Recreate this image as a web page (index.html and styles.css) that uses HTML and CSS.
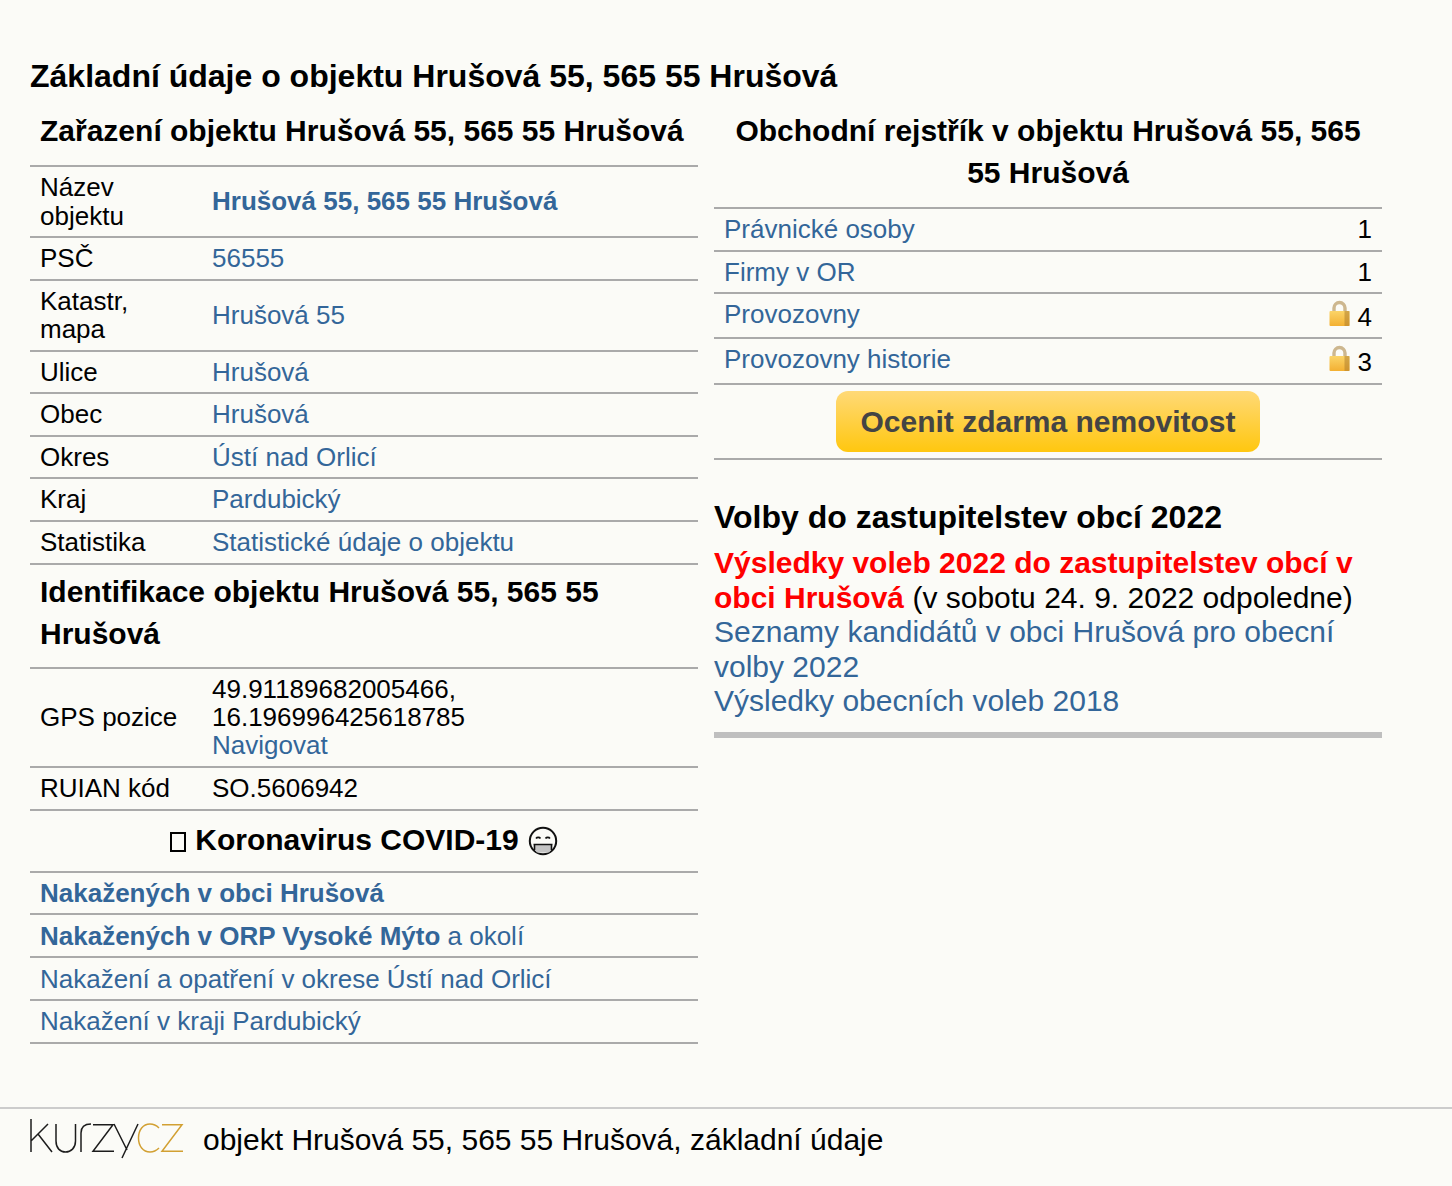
FILE: index.html
```html
<!DOCTYPE html>
<html lang="cs">
<head>
<meta charset="utf-8">
<title>Hrušová 55</title>
<link rel="stylesheet" href="styles.css">
</head>
<body>
<svg class="defs" width="0" height="0" aria-hidden="true">
  <defs>
    <linearGradient id="lockbody" x1="0" y1="0" x2="0" y2="1"><stop offset="0" stop-color="#fbd468"/><stop offset="1" stop-color="#f3b032"/></linearGradient>
    <symbol id="lock" viewBox="0 0 20 26">
      <path d="M4.500 12V8a5.500 5.500 0 0 1 11 0V12" fill="none" stroke="#cdb78f" stroke-width="3.400"/>
      <rect x="0" y="11" width="20" height="15" rx="1" fill="url(#lockbody)"/>
      <rect x="15" y="11" width="5" height="15" fill="#a9772a" opacity=".5"/>
    </symbol>
  </defs>
</svg>
<main class="page">
  <h1 class="title">Základní údaje o objektu Hrušová 55, 565 55 Hrušová</h1>
  <div class="columns">
    <section class="col">
      <h2 class="head left first">Zařazení objektu Hrušová 55, 565 55 Hrušová</h2>
      <table class="info">
        <tr><td class="k">Název objektu</td><td><a href="#"><b>Hrušová 55, 565 55 Hrušová</b></a></td></tr>
        <tr><td class="k">PSČ</td><td><a href="#">56555</a></td></tr>
        <tr><td class="k">Katastr, mapa</td><td><a href="#">Hrušová 55</a></td></tr>
        <tr><td class="k">Ulice</td><td><a href="#">Hrušová</a></td></tr>
        <tr><td class="k">Obec</td><td><a href="#">Hrušová</a></td></tr>
        <tr><td class="k">Okres</td><td><a href="#">Ústí nad Orlicí</a></td></tr>
        <tr><td class="k">Kraj</td><td><a href="#">Pardubický</a></td></tr>
        <tr><td class="k">Statistika</td><td><a href="#">Statistické údaje o objektu</a></td></tr>
      </table>
      <h2 class="head left">Identifikace objektu Hrušová 55, 565 55 Hrušová</h2>
      <table class="info">
        <tr><td class="k">GPS pozice</td><td>49.91189682005466,<br>16.196996425618785<br><a href="#">Navigovat</a></td></tr>
        <tr><td class="k">RUIAN kód</td><td>SO.5606942</td></tr>
      </table>
      <h2 class="head center covid"><span class="tofu"></span> Koronavirus COVID-19 <svg class="mask" width="30" height="30" viewBox="0 0 30 30" role="img" aria-label="rouška">
        <circle cx="15" cy="15" r="13.200" fill="none" stroke="#111" stroke-width="2"/>
        <path d="M6 23V19H24V23L21 26.500H9Z" fill="#c4c4c4"/>
        <path d="M5.500 18.500H24.500M6.500 19V24M23.500 19V24" fill="none" stroke="#111" stroke-width="1.600"/>
        <path d="M8 12.500C9 11 11.500 11 12.500 12.500M17.500 12.500C18.500 11 21 11 22 12.500" fill="none" stroke="#111" stroke-width="1.600"/>
      </svg></h2>
      <ul class="list">
        <li><a href="#"><b>Nakažených v obci Hrušová</b></a></li>
        <li><a href="#"><b>Nakažených v ORP Vysoké Mýto</b> a okolí</a></li>
        <li><a href="#">Nakažení a opatření v okrese Ústí nad Orlicí</a></li>
        <li><a href="#">Nakažení v kraji Pardubický</a></li>
      </ul>
    </section>
    <section class="col">
      <h2 class="head center">Obchodní rejstřík v objektu Hrušová 55, 565 55 Hrušová</h2>
      <ul class="list reg">
        <li><a href="#">Právnické osoby</a><span class="num">1</span></li>
        <li><a href="#">Firmy v OR</a><span class="num">1</span></li>
        <li class="locked"><a href="#">Provozovny</a><span class="num"><svg class="lock"><use href="#lock"/></svg> 4</span></li>
        <li class="locked"><a href="#">Provozovny historie</a><span class="num"><svg class="lock"><use href="#lock"/></svg> 3</span></li>
      </ul>
      <div class="cta-row"><a class="cta" href="#">Ocenit zdarma nemovitost</a></div>
      <h2 class="vote-head">Volby do zastupitelstev obcí 2022</h2>
      <div class="vote">
        <a class="red" href="#">Výsledky voleb 2022 do zastupitelstev obcí v obci Hrušová</a> (v sobotu 24. 9. 2022 odpoledne)<br>
        <a href="#">Seznamy kandidátů v obci Hrušová pro obecní volby 2022</a><br>
        <a href="#">Výsledky obecních voleb 2018</a>
      </div>
    </section>
  </div>
</main>
<footer class="foot">
  <svg class="logo" width="156" height="42" viewBox="0 0 156 42" role="img" aria-label="kurzy.cz">
    <g fill="none" stroke="#1c1c1c" stroke-width="1.500">
      <path d="M1 0V33M1 22L18 5M8 15L22 33"/>
      <path d="M26 5V22C26 29 30 33 35.500 33S45.500 29 45.500 22V5"/>
      <path d="M51 33V14C51 8 55 5 61 5"/>
      <path d="M63 5.700H83L63 32.300H84"/>
      <path d="M84 5L97 31M108 5L92 39"/>
    </g>
    <g fill="none" stroke="#d2a032" stroke-width="1.500">
      <path d="M129 9C126.500 6.500 123.500 5 120 5C113 5 108.500 11 108.500 19S113 33 120 33C123.500 33 126.500 31.500 129 29"/>
      <path d="M132 5.700H152L132 32.300H153"/>
    </g>
  </svg>
  <span class="foot-text">objekt Hrušová 55, 565 55 Hrušová, základní údaje</span>
</footer>
</body>
</html>
```
FILE: styles.css
```css
* { box-sizing: border-box; }
html, body { margin: 0; padding: 0; }
body {
  background: #fbfbf7;
  color: #000;
  font-family: "Liberation Sans", Arial, sans-serif;
  font-size: 26px;
  line-height: 28.4px;
  min-height: 1186px;
  display: flex;
  flex-direction: column;
}
.defs { position: absolute; }
a { color: #336699; text-decoration: none; }
.page { padding: 55px 70px 0 30px; flex: 1; }
.title { font-size: 32px; line-height: 42px; margin: 0 0 13px; font-weight: bold; }
.columns { display: grid; grid-template-columns: 668px 668px; column-gap: 16px; align-items: start; }
.head {
  font-size: 30px; line-height: 42px; margin: 0; padding: 0 10px 13px;
  text-align: center; font-weight: bold;
}
.head.left { text-align: left; padding: 6px 10px 12px; }
.head.first { padding: 0 10px 13px; }
.head.center { text-align: center; }
.covid { padding: 8px 0 10px; display: block; }
.tofu { display: inline-block; width: 16px; height: 20px; margin-right: 1px; border: 2px solid #000; vertical-align: -2px; }
.mask { vertical-align: -6px; margin-left: 1px; }
.info { width: 100%; border-collapse: collapse; border-top: 2px solid #aaa; }
.info td { padding: 6.100px 10px; border-bottom: 2px solid #aaa; vertical-align: middle; }
.info .k { width: 172px; }
.list { list-style: none; margin: 0; padding: 0; border-top: 2px solid #aaa; }
.list li { padding: 6.200px 10px 6.300px; border-bottom: 2px solid #aaa; display: flex; justify-content: space-between; }
.list.reg li { padding: 6.100px 10px; }
.num { white-space: nowrap; }
.list.reg .locked { padding-top: 5.900px; padding-bottom: 5.900px; }
.lock { width: 21px; height: 26px; vertical-align: 0; }
.cta-row { display: flex; justify-content: center; padding: 6px 0 6px; border-bottom: 2px solid #aaa; }
.cta {
  display: block; width: 424px; height: 61px; border-radius: 12px; text-align: center;
  background: linear-gradient(#ffd977, #ffc70f);
  color: #444; font-weight: bold; font-size: 30px; line-height: 61px;
}
.vote-head { font-size: 32px; line-height: 42px; margin: 36px 0 8.500px; font-weight: bold; }
.vote { font-size: 30px; line-height: 34.500px; padding-bottom: 13px; border-bottom: 6px solid #bfbfbf; }
.red { color: #ff0000; font-weight: bold; }
.foot { height: 79px; border-top: 2px solid #ccc; display: flex; align-items: flex-start; padding: 10px 0 0 30px; flex: none; }
.logo { flex: none; }
.foot-text { font-size: 30px; line-height: 40px; margin-left: 17px; margin-top: 1px; }
```
